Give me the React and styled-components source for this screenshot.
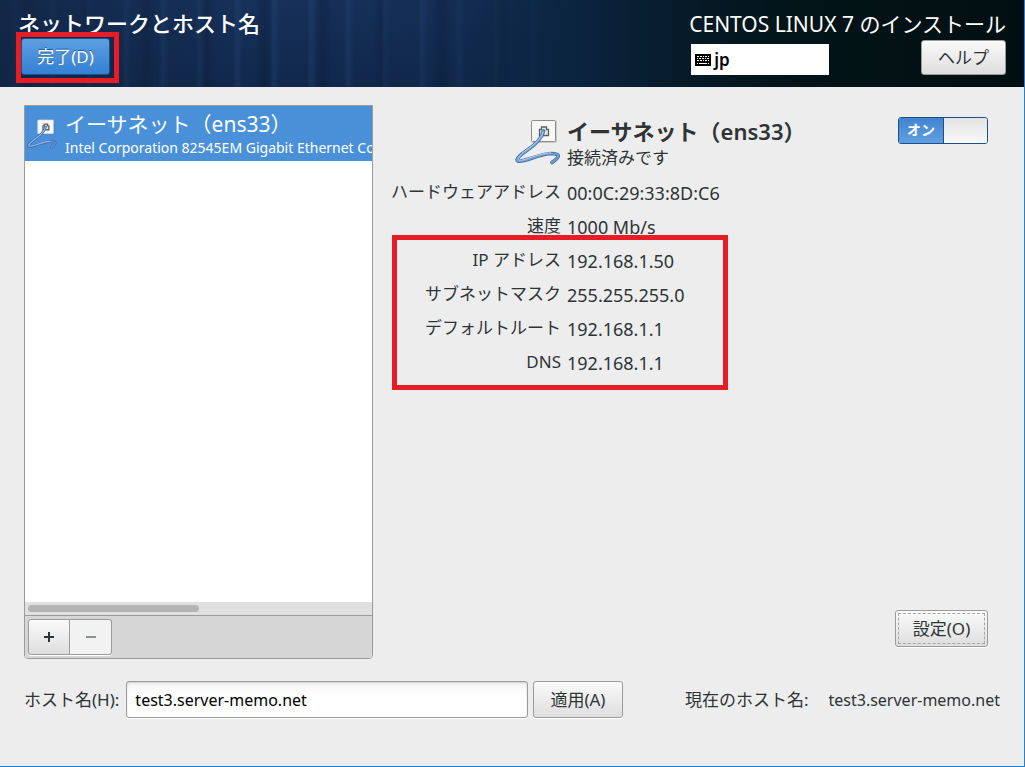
import React, { useState } from 'react'
import styled, { createGlobalStyle } from 'styled-components'

const details = [
    { label: 'ハードウェアアドレス', value: '00:0C:29:33:8D:C6' },
    { label: '速度', value: '1000 Mb/s' },
]

const addresses = [
    { label: 'IP アドレス', value: '192.168.1.50' },
    { label: 'サブネットマスク', value: '255.255.255.0' },
    { label: 'デフォルトルート', value: '192.168.1.1' },
    { label: 'DNS', value: '192.168.1.1' },
]

function WiredIcon({ size, selected }) {
    return (
        <svg width={size} height={size} viewBox="0 0 46 46" fill="none" aria-hidden="true">
            <rect x="17" y="2" width="25" height="22" rx="1" fill="#000" opacity="0.15" />
            <rect x="16.5" y="1.5" width="24" height="21" rx="1" fill="#f6f6f4" stroke={selected ? '#d8dde2' : '#8b8d88'} />
            <path d="M24.500 16.500v-6h2v-2.500h5v2.500h2v6z" fill="#e4e6e2" stroke="#5d605b" strokeWidth={selected ? 2 : 1.300} />
            <path d="M28.500 12C27 20 20 26 11 32C5 36 0 41 3 42C9 43.500 24 35 36 34.500C45 34.500 46 37 37 43.500" stroke={selected ? '#2c5c9c' : '#3a679f'} strokeWidth="3.600" strokeLinecap="round" />
            <path d="M28.500 12C27 20 20 26 11 32C5 36 0 41 3 42C9 43.500 24 35 36 34.500C45 34.500 46 37 37 43.500" stroke={selected ? '#6a9ad6' : '#729fcf'} strokeWidth="2.200" strokeLinecap="round" />
            <path d="M28 13C26 20 19 26 10 32C5 36 2 40 4 41.200C10 42 24 34 36 33.800" stroke="#c3d9f0" strokeWidth="0.900" />
        </svg>
    )
}

function KeyboardIcon() {
    return (
        <svg width="16" height="12" viewBox="0 0 16 12" shapeRendering="crispEdges" aria-hidden="true">
            <rect width="16" height="12" rx="1" fill="#000" />
            <path d="M2 2.500h2M5 2.500h2M8 2.500h1M10 2.500h2M13 2.500h1M2 4.500h1M4 4.500h2M7 4.500h2M10 4.500h1M12 4.500h2M2 6.500h2M5 6.500h2M8 6.500h1M10 6.500h2M13 6.500h1M2 9h1M4 9h8M13 9h1" stroke="#fff" strokeWidth="1" />
        </svg>
    )
}

export default function App() {
    const [hostname, setHostname] = useState('test3.server-memo.net')
    const [enabled, setEnabled] = useState(true)

    return (
        <Window>
            <GlobalStyle />

            <Header>
                <HeaderSide>
                    <SpokeTitle>ネットワークとホスト名</SpokeTitle>
                    <DoneFrame>
                        <DoneButton type="button">完了(D)</DoneButton>
                    </DoneFrame>
                </HeaderSide>

                <HeaderSide>
                    <ProductTitle>CENTOS LINUX 7 のインストール</ProductTitle>
                    <HeaderTools>
                        <Layout>
                            <KeyboardIcon />
                            jp
                        </Layout>
                        <HelpButton type="button">ヘルプ</HelpButton>
                    </HeaderTools>
                </HeaderSide>
            </Header>

            <Main>
                <DevicePanel>
                    <DeviceList>
                        <Device>
                            <WiredIcon size={30} selected />
                            <DeviceText>
                                <span className="name">イーサネット（ens33）</span>
                                <span className="model">Intel Corporation 82545EM Gigabit Ethernet Controller (Copper)</span>
                            </DeviceText>
                        </Device>
                    </DeviceList>
                    <ScrollTrack>
                        <ScrollThumb />
                    </ScrollTrack>
                    <DeviceToolbar>
                        <ToolButton type="button" aria-label="追加">
                            <svg width="12" height="12" viewBox="0 0 12 12"><path d="M6 1v10M1 6h10" stroke="currentColor" strokeWidth="2" /></svg>
                        </ToolButton>
                        <ToolButton type="button" aria-label="削除" disabled>
                            <svg width="12" height="12" viewBox="0 0 12 12"><path d="M1 6h10" stroke="currentColor" strokeWidth="2" /></svg>
                        </ToolButton>
                    </DeviceToolbar>
                </DevicePanel>

                <DevicePage>
                    <PageTop>
                        <Heading>
                            <WiredIcon size={46} />
                            <div>
                                <h2>イーサネット（ens33）</h2>
                                <p>接続済みです</p>
                            </div>
                        </Heading>
                        <Switch>
                            <input
                                type="checkbox"
                                role="switch"
                                aria-label="イーサネット（ens33）"
                                checked={enabled}
                                onChange={(e) => setEnabled(e.target.checked)}
                            />
                            <SwitchLabel $on={enabled}>{enabled ? 'オン' : 'オフ'}</SwitchLabel>
                            <SwitchKnob />
                        </Switch>
                    </PageTop>

                    <Details>
                        {details.map((item) => (
                            <Detail key={item.label}>
                                <dt>{item.label}</dt>
                                <dd>{item.value}</dd>
                            </Detail>
                        ))}
                    </Details>
                    <AddressDetails>
                        {addresses.map((item) => (
                            <Detail key={item.label}>
                                <dt>{item.label}</dt>
                                <dd>{item.value}</dd>
                            </Detail>
                        ))}
                    </AddressDetails>

                    <ConfigureButton type="button">設定(O)</ConfigureButton>
                </DevicePage>
            </Main>

            <Footer>
                <label htmlFor="hostname">ホスト名(H):</label>
                <HostInput id="hostname" type="text" value={hostname} onChange={(e) => setHostname(e.target.value)} />
                <ApplyButton type="button">適用(A)</ApplyButton>
                <CurrentHost>
                    <span>現在のホスト名:</span>
                    <span className="host">test3.server-memo.net</span>
                </CurrentHost>
            </Footer>
        </Window>
    )
}

const GlobalStyle = createGlobalStyle`
    * {
        box-sizing: border-box;
    }

    body {
        margin: 0;
        background: #ededed;
        color: #2e3436;
        font-family: 'Noto Sans', 'Noto Sans CJK JP', sans-serif;
        font-size: 17px;
        line-height: 24px;
    }

    button, input {
        font: inherit;
        color: inherit;
    }

    h1, h2, p, dl, dd {
        margin: 0;
    }
`

const Window = styled.div`
    min-height: 100vh;
    display: flex;
    flex-direction: column;
    border-right: 1px solid #2a7fc9;
    border-bottom: 1px solid #2a7fc9;
`

const Header = styled.header`
    display: flex;
    justify-content: space-between;
    padding: 8px 18px 4px 16px;
    color: #fff;
    background:
        linear-gradient(90deg, rgba(17, 36, 66, 0.7) 0%, rgba(19, 43, 80, 0) 25%, rgba(14, 36, 66, 0.2) 42%, #0b2440 56%, #061a28 67%, #021418 78%, #020f12 100%),
        repeating-linear-gradient(90deg, transparent 0 11px, rgba(80, 130, 190, 0.1) 14px 16px, transparent 21px 37px),
        repeating-linear-gradient(90deg, transparent 0 20px, rgba(0, 5, 25, 0.15) 26px 30px, transparent 38px 59px),
        linear-gradient(#17315a, #11284c);
`

const HeaderSide = styled.div`
    display: flex;
    flex-direction: column;
`

const SpokeTitle = styled.h1`
    padding-left: 2px;
    font-size: 22px;
    font-weight: 500;
    line-height: 28px;
    font-family: 'Noto Sans CJK JP', sans-serif;
`

const ProductTitle = styled.div`
    font-size: 21px;
    line-height: 32px;
    white-space: nowrap;
`

// red frame that points at the next thing to press
const DoneFrame = styled.div`
    align-self: flex-start;
    margin-top: -4px;
    padding: 1px 4px 3px 0;
    border: 5px solid #e81c24;
`

const Button = styled.button`
    border: 1px solid #9a9c9a;
    border-radius: 3px;
    background: linear-gradient(#fafafa, #dedede);
    box-shadow: 0 1px #fff;
    color: #2e3436;
    white-space: nowrap;
`

const DoneButton = styled(Button)`
    display: block;
    width: 89px;
    height: 37px;
    padding: 0;
    border-color: #1c5187;
    background: linear-gradient(#5d9fe0, #3480d4);
    box-shadow: none;
    color: #fff;
    text-shadow: 0 -1px #23578f;
`

const HeaderTools = styled.div`
    display: flex;
    justify-content: space-between;
    align-items: flex-end;
    margin-top: auto;
    padding: 0 0 8px 2px;
`

const Layout = styled.div`
    display: flex;
    align-items: center;
    gap: 3px;
    width: 138px;
    height: 31px;
    padding: 0 4px;
    background: #fff;
    color: #000;
    font-weight: 600;
`

const HelpButton = styled(Button)`
    width: 85px;
    height: 35px;
    box-shadow: none;
`

const Main = styled.main`
    flex: 1;
    display: flex;
    padding: 18px 36px 0 24px;
`

const DevicePanel = styled.section`
    flex: 0 0 349px;
    display: flex;
    flex-direction: column;
    overflow: hidden;
    border: 1px solid #9a9c9a;
    border-radius: 0 0 4px 4px;
    background: #fff;
`

const DeviceList = styled.ul`
    flex: 1;
    margin: 0;
    padding: 0;
    list-style: none;
`

const Device = styled.li`
    display: flex;
    align-items: center;
    gap: 8px;
    height: 55px;
    padding-left: 2px;
    background: #4a90d9;
    color: #fff;
`

const DeviceText = styled.div`
    flex: 1;
    min-width: 0;
    overflow: hidden;
    white-space: nowrap;

    & > .name {
        display: block;
        font-size: 21px;
        line-height: 28px;
    }

    & > .model {
        display: block;
        font-size: 14px;
        line-height: 20px;
    }
`

const ScrollTrack = styled.div`
    padding: 3px;
    border-bottom: 1px solid #9a9c9a;
    background: #e0e0e0;
`

const ScrollThumb = styled.div`
    width: 50%;
    height: 7px;
    border-radius: 4px;
    background: #b3b4b3;
`

const DeviceToolbar = styled.div`
    display: flex;
    padding: 3px;
    background: #d6d6d6;
`

const ToolButton = styled(Button)`
    display: grid;
    place-items: center;
    width: 42px;
    height: 36px;
    padding: 0;
    border-radius: 3px 0 0 3px;

    & + & {
        border-left: 0;
        border-radius: 0 3px 3px 0;
    }

    &:disabled {
        background: #f2f2f2;
        color: #8d9091;
    }
`

const DevicePage = styled.section`
    flex: 1;
    display: flex;
    flex-direction: column;
    padding-left: 18px;
`

const PageTop = styled.div`
    display: flex;
    justify-content: space-between;
    align-items: flex-start;
    padding: 12px 0 4px 124px;
`

const Heading = styled.div`
    display: flex;
    gap: 6px;

    & > svg {
        margin-top: 2px;
    }

    & h2 {
        font-size: 22px;
        font-weight: 600;
        line-height: 28px;
    }

    & p {
        line-height: 26px;
    }
`

const Switch = styled.label`
    position: relative;
    display: flex;
    width: 90px;
    height: 27px;
    border: 1px solid #204f86;
    border-radius: 3px;
    overflow: hidden;

    & > input {
        position: absolute;
        inset: 0;
        width: 100%;
        height: 100%;
        margin: 0;
        opacity: 0;
    }
`

const SwitchLabel = styled.span`
    flex: 1;
    order: ${({ $on }) => ($on ? 0 : 1)};
    background: ${({ $on }) => ($on ? 'linear-gradient(#4284d0, #5f9fe2)' : '#d6d6d6')};
    color: ${({ $on }) => ($on ? '#fff' : '#2e3436')};
    font-size: 14px;
    font-weight: 600;
    line-height: 24px;
    text-align: center;
`

const SwitchKnob = styled.span`
    width: 44px;
    border-left: 1px solid #204f86;
    background: linear-gradient(#e2e2e2, #fafafa);
`

const Details = styled.dl`
    display: flex;
    flex-direction: column;
`

// the frame is wider than its rows, so it hangs over the lines around it
const AddressDetails = styled(Details)`
    position: relative;
    align-self: flex-start;

    &::after {
        content: '';
        position: absolute;
        inset: -8px -3px -11px 1px;
        border: 5px solid #e81c24;
        pointer-events: none;
    }
`

const Detail = styled.div`
    display: grid;
    grid-template-columns: 170px 158px;
    column-gap: 6px;
    align-items: center;
    height: 34px;
    white-space: nowrap;

    & > dt {
        text-align: right;
    }

    & > dd {
        padding-top: 2px;
        font-size: 18px;
    }
`

const ConfigureButton = styled(Button)`
    align-self: flex-end;
    width: 93px;
    height: 37px;
    margin: auto 0 12px;
    outline: 1px dashed #a5a7a5;
    outline-offset: -4px;
`

const Footer = styled.footer`
    display: flex;
    align-items: center;
    padding: 22px 24px 48px;
    white-space: nowrap;
`

const HostInput = styled.input`
    flex: 1;
    min-width: 0;
    height: 37px;
    margin: 0 5px 0 7px;
    padding: 0 8px;
    border: 1px solid #9a9c9a;
    border-radius: 3px;
    background: linear-gradient(#f4f4f4, #fff 40%);
    box-shadow: inset 0 1px 2px rgba(0, 0, 0, 0.15), 0 1px #fff;
    color: #000;
    font-size: 16px;
`

const ApplyButton = styled(Button)`
    width: 90px;
    height: 37px;
`

const CurrentHost = styled.div`
    display: flex;
    gap: 20px;
    margin-left: 62px;

    & > .host {
        font-size: 16px;
    }
`
